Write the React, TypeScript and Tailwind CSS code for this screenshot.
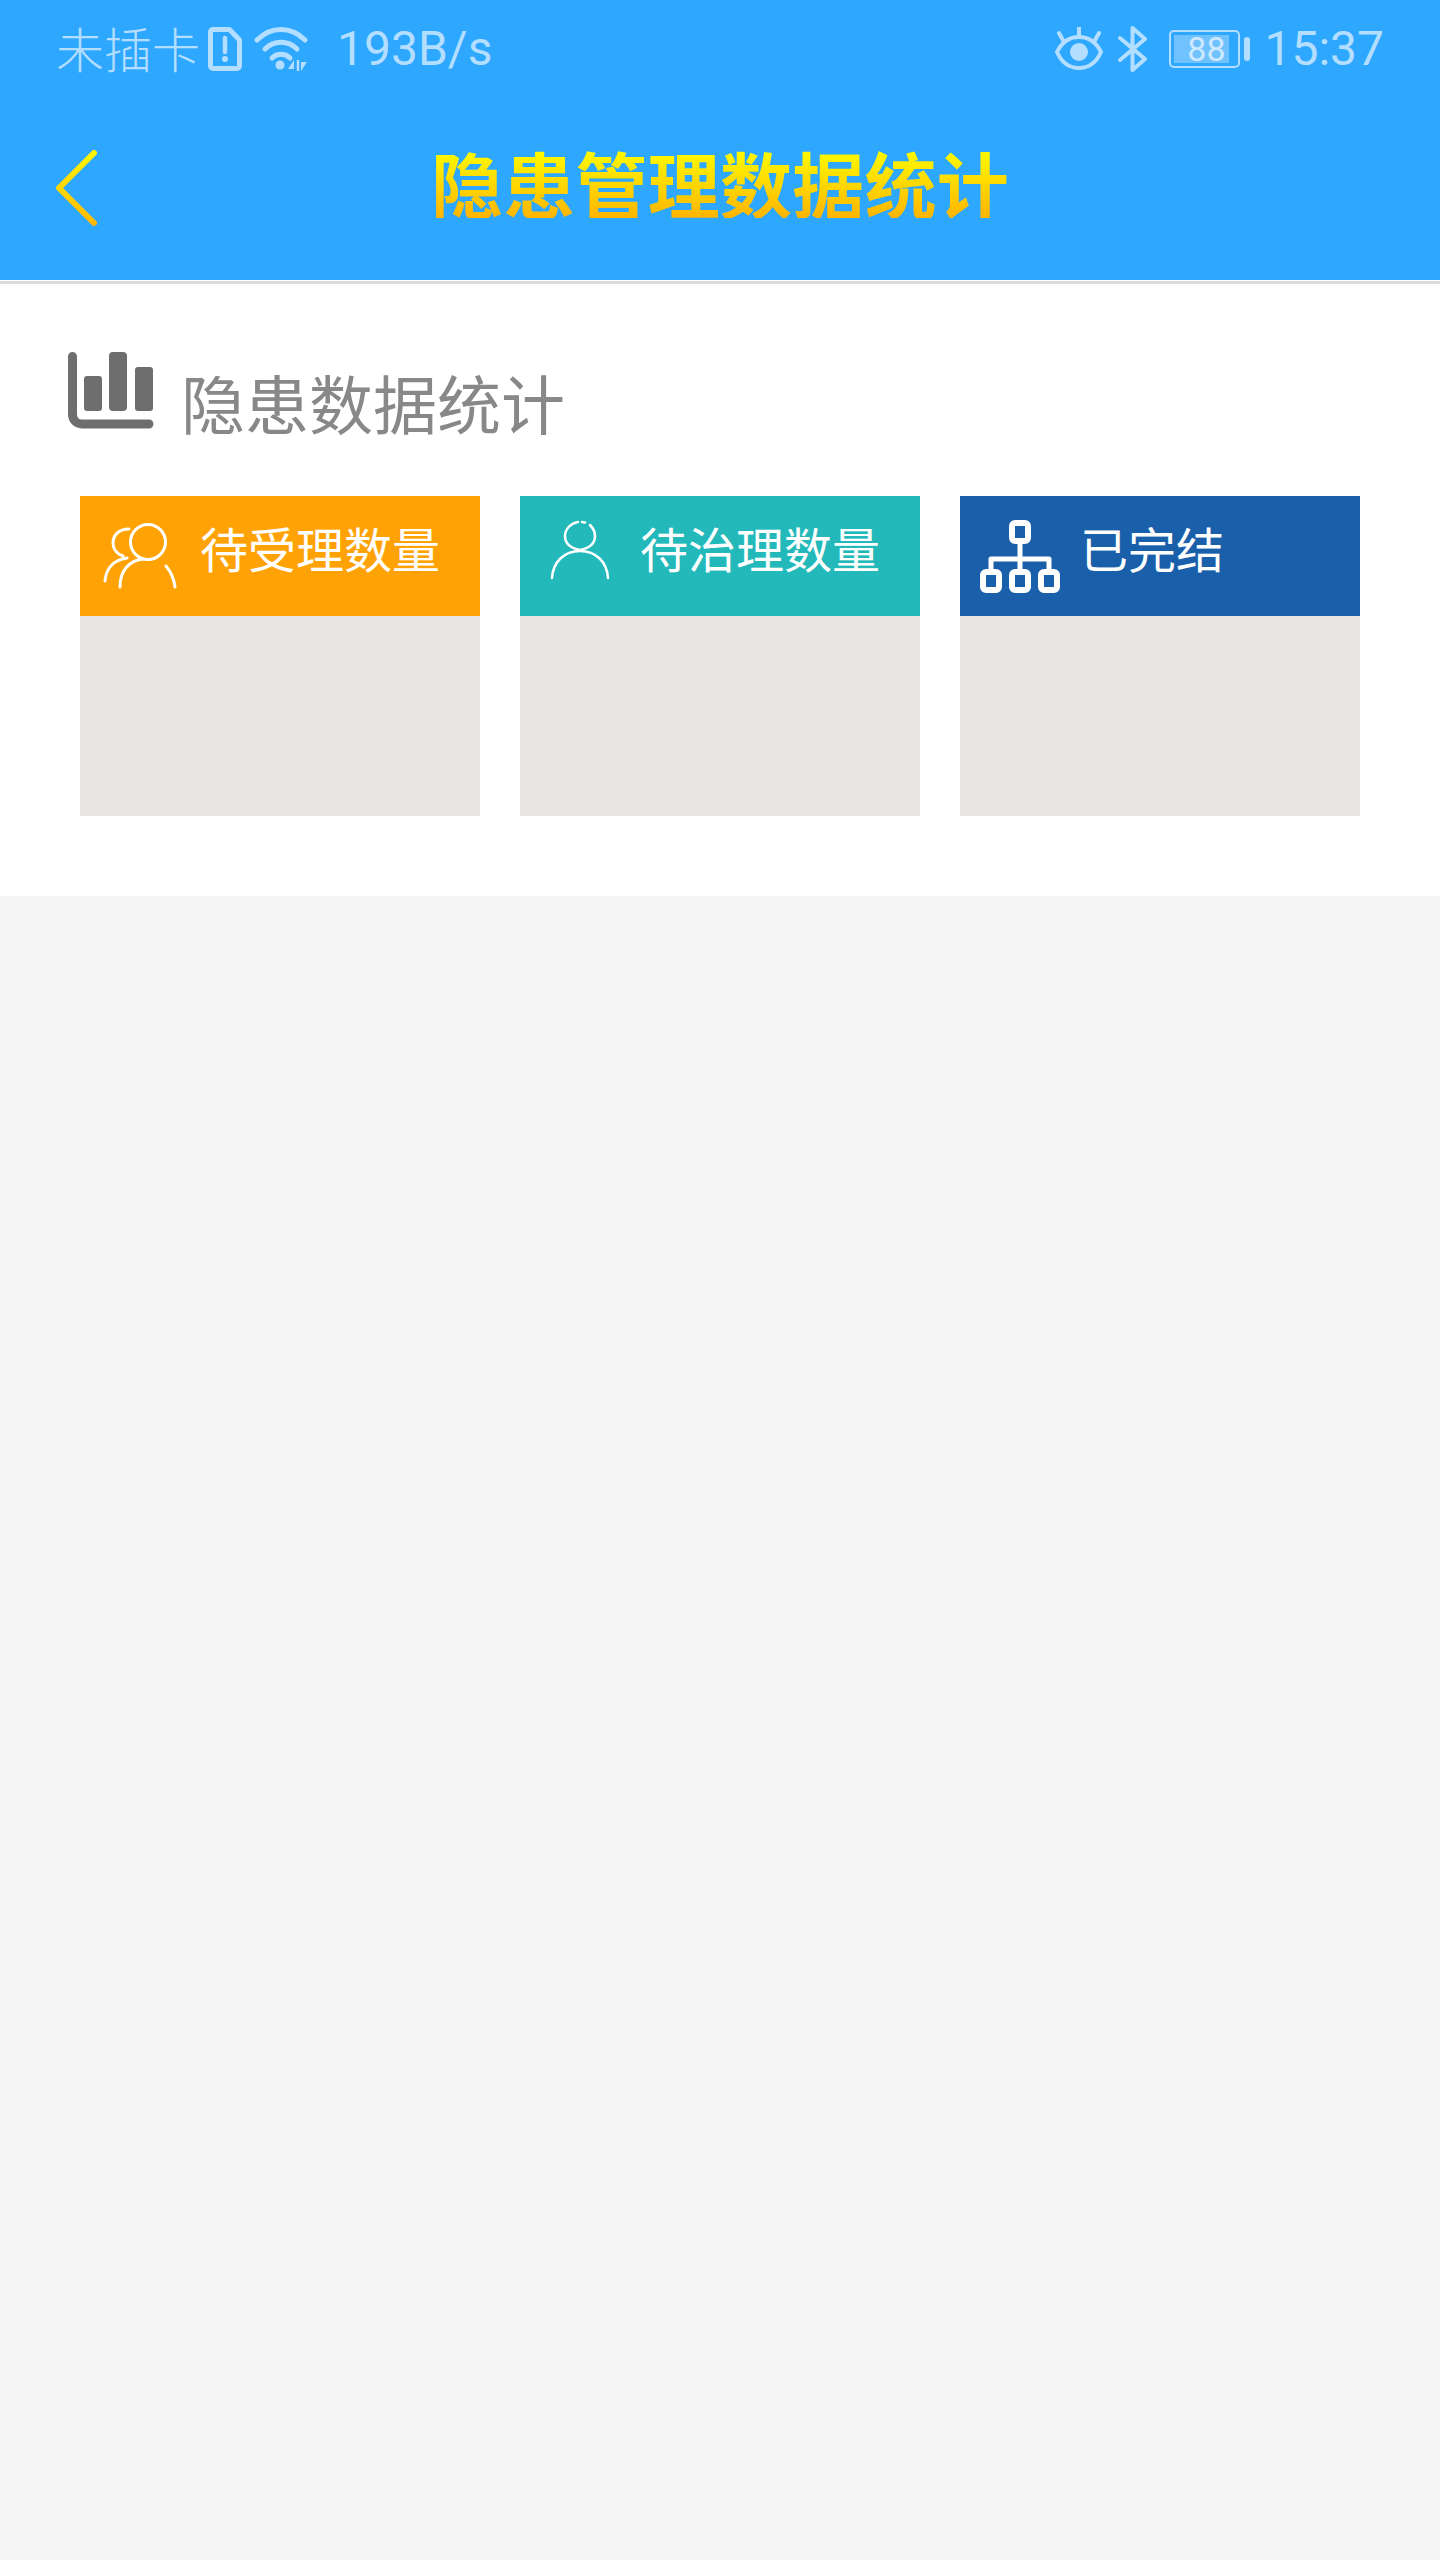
const cjk = "font-['Noto_Sans_CJK_SC',sans-serif]";

function SimIcon() {
  return (
    <svg width="34" height="44" viewBox="0 0 34 44" className="ml-[8px] shrink-0" fill="none">
      <path d="M5 2.500H21.500L31.500 13V39a2.500 2.500 0 0 1-2.500 2.500H5A2.500 2.500 0 0 1 2.500 39V5A2.500 2.500 0 0 1 5 2.500Z" stroke="#b3deff" strokeWidth="5" strokeLinejoin="round" />
      <path d="M17 11V25" stroke="#b3deff" strokeWidth="4.500" strokeLinecap="round" />
      <circle cx="17" cy="32" r="3" fill="#b3deff" />
    </svg>
  );
}

function WifiIcon() {
  return (
    <svg width="54" height="44" viewBox="0 0 54 44" className="ml-[12px] shrink-0" fill="none" stroke="#b3deff" strokeWidth="5" strokeLinecap="round">
      <path d="M3 13C17 -1 37 -1 51 13" />
      <path d="M11 22C20 13 34 13 43 22" />
      <path d="M18 31C23 26 31 26 36 31" />
      <circle cx="26" cy="38" r="4.500" fill="#b3deff" stroke="none" />
      <path d="M40 33L34 42H40Z" fill="#b3deff" stroke="none" />
      <path d="M44 33V44" strokeWidth="2.500" strokeLinecap="butt" />
      <path d="M47 35H53L47 44Z" fill="#b3deff" stroke="none" />
    </svg>
  );
}

function EyeIcon() {
  return (
    <svg width="48" height="44" viewBox="0 0 48 44" className="shrink-0" fill="none" stroke="#b3deff" strokeWidth="4" strokeLinecap="round">
      <path d="M24 10C35 10 42 17 46 25C42 34 35 41 24 41C13 41 6 34 2 25C6 17 13 10 24 10Z" />
      <path d="M24 1V9M4 6L9 15M44 6L39 15" />
      <circle cx="24" cy="25" r="9" fill="#b3deff" stroke="none" />
    </svg>
  );
}

function BluetoothIcon() {
  return (
    <svg width="30" height="46" viewBox="0 0 30 46" className="ml-[15px] shrink-0" fill="none" stroke="#b3deff" strokeWidth="4" strokeLinecap="round" strokeLinejoin="round">
      <path d="M2 12L27 33L14.500 44V2L27 13L2 34" />
    </svg>
  );
}

function BatteryIcon() {
  return (
    <div className="ml-[21px] flex items-center shrink-0">
      <div className="relative w-[71px] h-[38px] rounded-[5px] border-2 border-[#b3deff] p-[3px]">
        <div className="h-full w-[55px] bg-[#70c2ff]" />
        <span className="absolute inset-0 flex items-center justify-center pl-[3px] text-[34px] leading-none font-['Roboto',sans-serif] text-[#cfe9ff]">
          88
        </span>
      </div>
      <div className="ml-[4px] w-[6px] h-[24px] rounded-[3px] bg-[#b3deff]" />
    </div>
  );
}

function BackIcon() {
  return (
    <svg width="44" height="76" viewBox="0 0 44 76" className="mb-[3px]" fill="none">
      <defs>
        <linearGradient id="backGrad" x1="0" y1="0" x2="0" y2="1">
          <stop offset="0" stopColor="#fff600" />
          <stop offset="1" stopColor="#ffb900" />
        </linearGradient>
      </defs>
      <path d="M39 3L4 38L39 73" stroke="url(#backGrad)" strokeWidth="6" strokeLinecap="round" strokeLinejoin="round" />
    </svg>
  );
}

function ChartIcon() {
  return (
    <svg width="86" height="78" viewBox="0 0 86 78" className="shrink-0" fill="#6e6e6e">
      <path d="M4.500 4.500V62C4.500 68 8.500 72 14 72H81" fill="none" stroke="#6e6e6e" strokeWidth="9" strokeLinecap="round" />
      <rect x="16" y="24" width="18" height="35" rx="3" />
      <rect x="41" y="0" width="18" height="59" rx="4" />
      <rect x="67" y="15" width="18" height="44" rx="3" />
    </svg>
  );
}

function UsersIcon() {
  return (
    <svg width="120" height="120" viewBox="0 0 120 120" className="shrink-0" fill="none" stroke="#fff" strokeWidth="3" strokeLinecap="round">
      <circle cx="68" cy="46" r="17.500" />
      <path d="M40 91C40 76 48 64 64 63" />
      <path d="M86 70C91 76 94 83 95 91" />
      <path d="M49 33C38 33 33 40 33 47C33 53 37 58 43 60" />
      <path d="M25 85C26 73 33 64 47 62" />
    </svg>
  );
}

function PersonIcon() {
  return (
    <svg width="120" height="120" viewBox="0 0 120 120" className="shrink-0" fill="none" stroke="#fff" strokeWidth="2.500" strokeLinecap="round">
      <path d="M58 26C51 27 45 33 45 40C45 47 50 52 60 54C70 52 75 47 75 40C75 36 73 32 70 29" />
      <path d="M62 26L65 26.500" />
      <path d="M32 82C33 66 44 55 60 55C76 55 87 66 88 82" />
    </svg>
  );
}

function OrgIcon() {
  return (
    <svg width="120" height="120" viewBox="0 0 120 120" className="shrink-0" fill="none" stroke="#fff" strokeWidth="6" strokeLinejoin="round">
      <rect x="52" y="27" width="16" height="18" rx="3" />
      <rect x="23" y="76" width="16" height="18" rx="3" />
      <rect x="52" y="76" width="16" height="18" rx="3" />
      <rect x="81" y="76" width="16" height="18" rx="3" />
      <path d="M60 46V75M31 75V63H89V75" strokeWidth="5" />
    </svg>
  );
}

const cards = [
  { title: '待受理数量', head: 'bg-[#ffa206]', icon: <UsersIcon /> },
  { title: '待治理数量', head: 'bg-[#23b9ba]', icon: <PersonIcon /> },
  { title: '已完结', head: 'bg-[#1a5fa9]', icon: <OrgIcon /> },
];

export default function App() {
  return (
    <div className={`min-h-[2560px] bg-[#f5f5f5] ${cjk}`}>
      {/* Header */}
      <div className="h-[280px] bg-[#2ea7ff]">
        <div className="flex h-[98px] items-center justify-between px-[56px] text-[#b3deff]">
          <div className="flex items-center">
            <span className="mb-[5px] text-[48px] leading-none font-light">未插卡</span>
            <SimIcon />
            <WifiIcon />
            <span className="ml-[29px] text-[48px] leading-none font-['Roboto',sans-serif]">193B/s</span>
          </div>
          <div className="flex items-center">
            <EyeIcon />
            <BluetoothIcon />
            <BatteryIcon />
            <span className="ml-[14px] text-[48px] leading-none font-['Roboto',sans-serif]">15:37</span>
          </div>
        </div>
        <div className="grid h-[182px] grid-cols-[1fr_auto_1fr] items-center px-[55px]">
          <BackIcon />
          <h1 className="mb-[14px] bg-gradient-to-b from-[#ffff00] to-[#ffb400] bg-clip-text text-[72px] leading-[72px] tracking-[0.25px] font-bold text-transparent">
            隐患管理数据统计
          </h1>
        </div>
      </div>
      <div className="h-px bg-white" />
      <div className="h-[3px] bg-[#dcdcdc]" />

      {/* Content */}
      <div className="bg-white h-[612px] px-[80px]">
        <div className="flex items-start -ml-[12px] pt-[68px]">
          <ChartIcon />
          <span className="ml-[27px] mt-[13px] text-[64px] leading-[72px] text-[#888888]">隐患数据统计</span>
        </div>
        <div className="mt-[59px] grid grid-cols-3 gap-[40px]">
          {cards.map((card) => (
            <div key={card.title}>
              <div className={`flex h-[120px] ${card.head}`}>
                {card.icon}
                <span className="pt-[27px] text-[48px] leading-[48px] text-white">{card.title}</span>
              </div>
              <div className="h-[200px] bg-[#e8e7e5]" />
            </div>
          ))}
        </div>
      </div>
    </div>
  );
}
